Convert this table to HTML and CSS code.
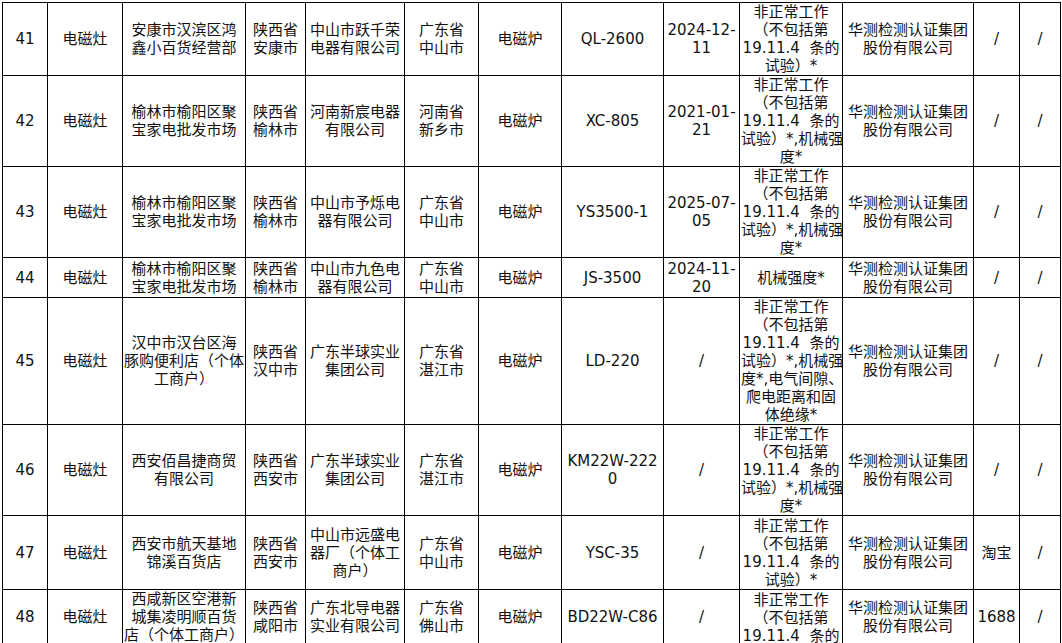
FILE: index.html
```html
<!DOCTYPE html>
<html lang="zh-CN">
<head>
<meta charset="utf-8">
<title>抽查结果</title>
<link rel="stylesheet" href="styles.css">
</head>
<body>
<table class="sheet">
  <colgroup>
    <col class="c1"><col class="c2"><col class="c3"><col class="c4"><col class="c5"><col class="c6"><col class="c7"><col class="c8"><col class="c9"><col class="c10"><col class="c11"><col class="c12"><col class="c13">
  </colgroup>
  <tbody>
    <tr class="r41">
      <td>41</td><td>电磁灶</td><td>安康市汉滨区鸿<br>鑫小百货经营部</td><td>陕西省<br>安康市</td><td>中山市跃千荣<br>电器有限公司</td><td>广东省<br>中山市</td><td>电磁炉</td><td>QL-2600</td><td>2024-12-<br>11</td><td>非正常工作<br>（不包括第<br>19.11.4&nbsp; 条的<br>试验）*</td><td>华测检测认证集团<br>股份有限公司</td><td>/</td><td>/</td>
    </tr>
    <tr class="r42">
      <td>42</td><td>电磁灶</td><td>榆林市榆阳区聚<br>宝家电批发市场</td><td>陕西省<br>榆林市</td><td>河南新宸电器<br>有限公司</td><td>河南省<br>新乡市</td><td>电磁炉</td><td>XC-805</td><td>2021-01-<br>21</td><td>非正常工作<br>（不包括第<br>19.11.4&nbsp; 条的<br>试验）*,机械强<br>度*</td><td>华测检测认证集团<br>股份有限公司</td><td>/</td><td>/</td>
    </tr>
    <tr class="r43">
      <td>43</td><td>电磁灶</td><td>榆林市榆阳区聚<br>宝家电批发市场</td><td>陕西省<br>榆林市</td><td>中山市予烁电<br>器有限公司</td><td>广东省<br>中山市</td><td>电磁炉</td><td>YS3500-1</td><td>2025-07-<br>05</td><td>非正常工作<br>（不包括第<br>19.11.4&nbsp; 条的<br>试验）*,机械强<br>度*</td><td>华测检测认证集团<br>股份有限公司</td><td>/</td><td>/</td>
    </tr>
    <tr class="r44">
      <td>44</td><td>电磁灶</td><td>榆林市榆阳区聚<br>宝家电批发市场</td><td>陕西省<br>榆林市</td><td>中山市九色电<br>器有限公司</td><td>广东省<br>中山市</td><td>电磁炉</td><td>JS-3500</td><td>2024-11-<br>20</td><td>机械强度*</td><td>华测检测认证集团<br>股份有限公司</td><td>/</td><td>/</td>
    </tr>
    <tr class="r45">
      <td>45</td><td>电磁灶</td><td>汉中市汉台区海<br>豚购便利店（个体<br>工商户）</td><td>陕西省<br>汉中市</td><td>广东半球实业<br>集团公司</td><td>广东省<br>湛江市</td><td>电磁炉</td><td>LD-220</td><td>/</td><td>非正常工作<br>（不包括第<br>19.11.4&nbsp; 条的<br>试验）*,机械强<br>度*,电气间隙、<br>爬电距离和固<br>体绝缘*</td><td>华测检测认证集团<br>股份有限公司</td><td>/</td><td>/</td>
    </tr>
    <tr class="r46">
      <td>46</td><td>电磁灶</td><td>西安佰昌捷商贸<br>有限公司</td><td>陕西省<br>西安市</td><td>广东半球实业<br>集团公司</td><td>广东省<br>湛江市</td><td>电磁炉</td><td>KM22W-222<br>0</td><td>/</td><td>非正常工作<br>（不包括第<br>19.11.4&nbsp; 条的<br>试验）*,机械强<br>度*</td><td>华测检测认证集团<br>股份有限公司</td><td>/</td><td>/</td>
    </tr>
    <tr class="r47">
      <td>47</td><td>电磁灶</td><td>西安市航天基地<br>锦溪百货店</td><td>陕西省<br>西安市</td><td>中山市远盛电<br>器厂（个体工<br>商户）</td><td>广东省<br>中山市</td><td>电磁炉</td><td>YSC-35</td><td>/</td><td>非正常工作<br>（不包括第<br>19.11.4&nbsp; 条的<br>试验）*</td><td>华测检测认证集团<br>股份有限公司</td><td>淘宝</td><td>/</td>
    </tr>
    <tr class="r48">
      <td>48</td><td>电磁灶</td><td>西咸新区空港新<br>城集凌明顺百货<br>店（个体工商户）</td><td>陕西省<br>咸阳市</td><td>广东北导电器<br>实业有限公司</td><td>广东省<br>佛山市</td><td>电磁炉</td><td>BD22W-C86</td><td>/</td><td><div class="clip">非正常工作<br>（不包括第<br>19.11.4&nbsp; 条的<br>试验）*</div></td><td>华测检测认证集团<br>股份有限公司</td><td>1688</td><td>/</td>
    </tr>
  </tbody>
</table>
</body>
</html>
```
FILE: styles.css
```css
html, body {
  margin: 0;
  padding: 0;
  background: #fff;
}

body {
  padding: 2px 0 0 2px;
  font-family: "DejaVu Sans", "Noto Sans CJK SC", sans-serif;
  font-size: 15px;
  line-height: 18px;
  color: #111;
}

.sheet {
  border-collapse: collapse;
  table-layout: fixed;
  width: 1059px;
}

.sheet td {
  border: 1px solid #000;
  padding: 0 1px;
  text-align: center;
  vertical-align: middle;
  white-space: nowrap;
  overflow: visible;
}

.c1 { width: 45px; }
.c2 { width: 75px; }
.c3 { width: 123px; }
.c4 { width: 60px; }
.c5 { width: 99px; }
.c6 { width: 74px; }
.c7 { width: 83px; }
.c8 { width: 102px; }
.c9 { width: 76px; }
.c10 { width: 103px; }
.c11 { width: 131px; }
.c12 { width: 46px; }
.c13 { width: 41px; }

.r41 { height: 72px; }
.r44 { height: 40px; }
.r47 { height: 74px; }

.r48 { height: 54px; }

.clip {
  max-height: 53px;
  overflow: hidden;
}
```
